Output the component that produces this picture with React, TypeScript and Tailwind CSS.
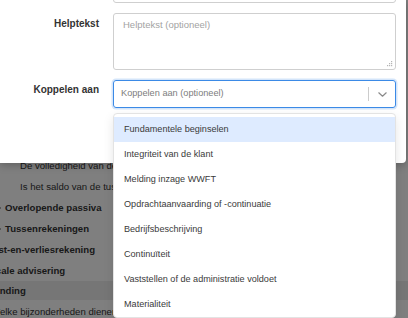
import React from 'react'

const items = [
  'Fundamentele beginselen',
  'Integriteit van de klant',
  'Melding inzage WWFT',
  'Opdrachtaanvaarding of -continuatie',
  'Bedrijfsbeschrijving',
  'Continuïteit',
  'Vaststellen of de administratie voldoet',
  'Materialiteit',
]

function Caret() {
  return <span className="mr-[4px] inline-block h-0 w-0 border-y-[3.5px] border-l-[4px] border-y-transparent border-l-[#222]" />
}

export default function App() {
  return (
    <div
      className="relative h-[318px] w-[408px] overflow-hidden bg-white text-[#333]"
      style={{ fontFamily: '"Liberation Sans", Arial, sans-serif' }}
    >
      {/* page behind the modal */}
      <div className="-ml-[20px] flex flex-col pt-[155px] text-[9.6px] leading-[21px]">
        <div className="h-[21px] pl-[40px]">De volledigheid van de tussenrekeningen</div>
        <div className="h-[21px] pl-[40px]">Is het saldo van de tussenrekeningen verklaard</div>
        <div className="flex h-[21px] items-center pl-[17px] font-bold">
          <Caret />
          Overlopende passiva
        </div>
        <div className="flex h-[21px] items-center pl-[17px] font-bold">
          <Caret />
          Tussenrekeningen
        </div>
        <div className="h-[21px] pl-[1px] font-bold">Winst-en-verliesrekening</div>
        <div className="h-[21px] pl-[2px] font-bold">Fiscale advisering</div>
        <div className="h-[19px] bg-[#ececec] pl-[-1px] font-bold leading-[19px]">Afronding</div>
        <div className="h-[21px] pl-[11px] leading-[24px]">Welke bijzonderheden dienen vermeld te worden</div>
      </div>

      {/* overlay */}
      <div className="absolute inset-0 bg-black/50" />

      {/* modal */}
      <div className="absolute left-0 top-0 flex h-[163px] w-[406px] flex-col gap-[10px] rounded-br-[4px] bg-white pr-[10px] shadow-[0_2px_8px_rgba(0,0,0,0.25)]">
        <div className="-mt-[37px] flex gap-[14px]">
          <div className="w-[99px]" />
          <div className="relative h-[40px] flex-1 rounded-[3px] border border-[#cfcfcf]">
            <Grip />
          </div>
        </div>

        <div className="flex gap-[14px]">
          <div className="w-[99px] pt-[5px] text-right text-[10px] font-bold leading-[12px] text-[#333]">Helptekst</div>
          <div className="relative h-[57px] flex-1 rounded-[3px] border border-[#cfcfcf] px-[9px] pt-[5px] text-[9.5px] leading-[12px] text-[#a3a3a3]">
            Helptekst (optioneel)
            <Grip />
          </div>
        </div>

        <div className="flex gap-[14px]">
          <div className="w-[99px] pt-[4px] text-right text-[10px] font-bold leading-[12px] text-[#333]">Koppelen aan</div>
          <div className="flex h-[28px] flex-1 items-center rounded-[3px] border border-[#3b8ae6] pl-[7px] shadow-[0_0_0_1.5px_rgba(59,138,230,0.22)]">
            <span className="flex-1 text-[9.2px] text-[#7d7d7d]">Koppelen aan (optioneel)</span>
            <span className="h-[14px] w-px bg-[#cccccc]" />
            <span className="flex w-[26px] justify-center">
              <svg width="9" height="5" viewBox="0 0 9 5" fill="none">
                <path d="M0.8 0.8l3.7 3.4 3.7-3.4" stroke="#8a8a8a" strokeWidth="1.2" strokeLinecap="round" strokeLinejoin="round" />
              </svg>
            </span>
          </div>
        </div>
      </div>

      {/* dropdown menu */}
      <div className="absolute left-[113px] top-[113px] w-[283px] rounded-[4px] border border-[#e3e3e3] bg-white pt-[3px] shadow-[0_4px_11px_rgba(0,0,0,0.1)]">
        {items.map((item, i) => (
          <div
            key={item}
            className={
              'flex h-[25px] items-center px-[10px] text-[9.1px] text-[#3a3a3a] ' +
              (i === 0 ? 'bg-[#deebff]' : '')
            }
          >
            {item}
          </div>
        ))}
      </div>
    </div>
  )
}

function Grip() {
  return (
    <svg className="absolute bottom-[2px] right-[2px]" width="6" height="6" viewBox="0 0 6 6">
      <rect x="4" y="0" width="1.2" height="1.2" fill="#b5b5b5" />
      <rect x="2" y="2" width="1.2" height="1.2" fill="#b5b5b5" />
      <rect x="4" y="2" width="1.2" height="1.2" fill="#b5b5b5" />
      <rect x="0" y="4" width="1.2" height="1.2" fill="#b5b5b5" />
      <rect x="2" y="4" width="1.2" height="1.2" fill="#b5b5b5" />
      <rect x="4" y="4" width="1.2" height="1.2" fill="#b5b5b5" />
    </svg>
  )
}
